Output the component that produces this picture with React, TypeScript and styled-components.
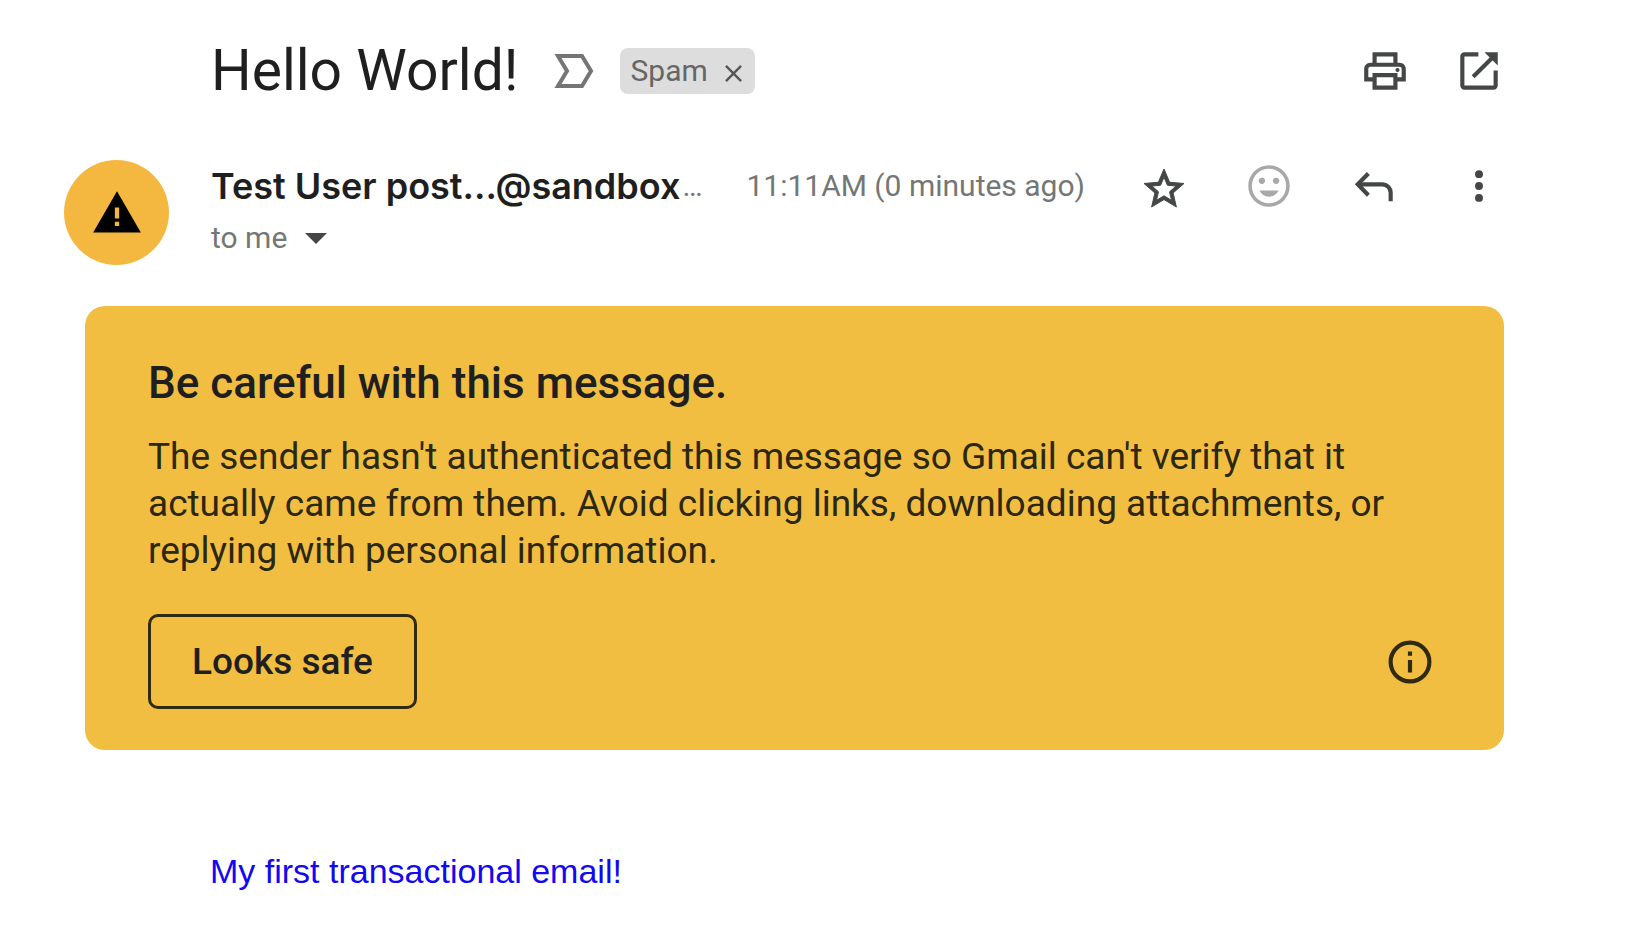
import React from 'react';
import styled, { createGlobalStyle } from 'styled-components';

const GlobalStyle = createGlobalStyle`
  *, *::before, *::after { box-sizing: border-box; }
  body { margin: 0; background: #fff; }
  button { font: inherit; color: inherit; background: none; border: 0; padding: 0; cursor: pointer; }
  h1, h2, p { margin: 0; }
`;

const Message = styled.main`
  padding: 39px 142px 40px 64px;
  font-family: Roboto, "Liberation Sans", sans-serif;
  color: #1f1f1f;
`;

const SubjectBar = styled.header`
  display: flex;
  align-items: center;
  justify-content: space-between;
  min-height: 64px;
  padding-left: 147px;
`;

const SubjectGroup = styled.div`
  display: flex;
  align-items: center;
`;

const Subject = styled.h1`
  font-size: 57px;
  line-height: 64px;
  font-weight: 400;
`;

const ImportantButton = styled.button`
  display: flex;
  margin: 0 26px 0 35px;
  color: #757575;
`;

const Chip = styled.span`
  display: flex;
  align-items: center;
  gap: 17px;
  height: 46px;
  padding: 0 13px 0 11px;
  border-radius: 8px;
  background: #ddd;
  color: #666;
  font-size: 30px;
  line-height: 46px;
`;

const ChipClose = styled.button`
  display: flex;
  padding-top: 4px;
  color: #555;
`;

const Actions = styled.div<{ $gap: number }>`
  display: flex;
  align-items: center;
  flex: none;
  gap: ${(p) => p.$gap}px;
`;

const IconButton = styled.button<{ $tone?: string }>`
  display: flex;
  flex: none;
  width: 50px;
  height: 50px;
  color: ${(p) => p.$tone ?? '#444746'};

  svg { width: 100%; height: 100%; }
`;

const SenderBar = styled.section`
  display: flex;
  align-items: flex-start;
  gap: 42px;
  margin-top: 57px;
`;

const Avatar = styled.div`
  display: grid;
  place-items: center;
  flex: none;
  width: 105px;
  height: 105px;
  border-radius: 50%;
  background: #f4b740;
  color: #000;
`;

const SenderDetails = styled.div`
  flex: 1;
  min-width: 0;
`;

const SenderLine = styled.div`
  display: flex;
  align-items: center;
  height: 52px;
`;

const SenderName = styled.span`
  margin-right: 2px;
  font-family: Inter, Roboto, sans-serif;
  font-size: 36px;
  line-height: 52px;
  font-weight: 600;
  white-space: nowrap;
`;

const Meta = styled.span`
  color: #747775;
  font-size: 30px;
  line-height: 52px;
  white-space: nowrap;
`;

const SentTime = styled.time`
  margin: 0 54px 0 auto;
  color: #747775;
  font-size: 30px;
  line-height: 52px;
  white-space: nowrap;
`;

const RecipientButton = styled.button`
  display: flex;
  align-items: center;
  gap: 18px;
`;

const Warning = styled.section`
  margin: 41px 0 0 21px;
  padding: 51px 69px 41px 63px;
  border-radius: 20px;
  background: #f1be42;
`;

const WarningTitle = styled.h2`
  font-size: 44px;
  line-height: 52px;
  font-weight: 500;
`;

const WarningText = styled.p`
  margin-top: 24px;
  color: #2b2710;
  font-size: 37px;
  line-height: 47px;
`;

const WarningActions = styled.div`
  display: flex;
  align-items: center;
  justify-content: space-between;
  margin-top: 40px;
`;

const SafeButton = styled.button`
  height: 95px;
  padding: 0 41px;
  border: 3px solid #2f2a10;
  border-radius: 10px;
  font-size: 37px;
  font-weight: 500;
`;

const Body = styled.p`
  margin: 101px 0 0 146px;
  color: #1408f0;
  font-family: "Liberation Sans", sans-serif;
  font-size: 34px;
  line-height: 40px;
`;

const ImportantIcon = () => (
  <svg width="40" height="34" viewBox="0 0 40 34" fill="none" stroke="currentColor" strokeWidth="4" aria-hidden="true">
    <path d="M4 2H28L37 17 28 32H4L13 17Z" />
  </svg>
);

const CloseIcon = () => (
  <svg width="17" height="17" viewBox="0 0 18 18" stroke="currentColor" strokeWidth="2.5" aria-hidden="true">
    <path d="M1 1L17 17M17 1L1 17" />
  </svg>
);

const PrintIcon = () => (
  <svg viewBox="0 0 24 24" fill="currentColor" aria-hidden="true">
    <path d="M19 8h-1V3H6v5H5c-1.66 0-3 1.34-3 3v6h4v4h12v-4h4v-6c0-1.66-1.34-3-3-3zM8 5h8v3H8V5zm8 14H8v-4h8v4zm2-4v-2H6v2H4v-4c0-.55.45-1 1-1h14c.55 0 1 .45 1 1v4h-2z" />
    <circle cx="18" cy="11.5" r="1" />
  </svg>
);

const OpenIcon = () => (
  <svg viewBox="0 0 24 24" fill="none" stroke="currentColor" strokeWidth="2" aria-hidden="true">
    <path d="M11.7 4H5a1 1 0 0 0-1 1v14a1 1 0 0 0 1 1h14a1 1 0 0 0 1-1v-7.300" />
    <path d="M9.200 14.800L19 5" />
    <path d="M14.600 3H21v6.400L14.600 3Z" fill="currentColor" stroke="none" />
  </svg>
);

const WarningIcon = () => (
  <svg width="52" height="52" viewBox="0 0 24 24" fill="currentColor" aria-hidden="true">
    <path d="M1 21h22L12 2 1 21zm12-3h-2v-2h2v2zm0-3.500h-2v-5h2v5z" />
  </svg>
);

const StarIcon = () => (
  <svg viewBox="-0.5 -2 25 25" fill="currentColor" stroke="currentColor" strokeWidth="0.5" aria-hidden="true">
    <path d="M22 9.240l-7.190-.62L12 2 9.190 8.630 2 9.240l5.460 4.730L5.820 21 12 17.270 18.180 21l-1.630-7.030L22 9.240zM12 15.400l-3.760 2.270 1-4.280-3.320-2.880 4.380-.38L12 6.100l1.710 4.040 4.380.38-3.320 2.880 1 4.280L12 15.400z" />
  </svg>
);

const SmileIcon = () => (
  <svg viewBox="0 0 24 24" fill="currentColor" aria-hidden="true">
    <circle cx="12" cy="12" r="9.100" fill="none" stroke="currentColor" strokeWidth="1.700" />
    <circle cx="8.600" cy="9.500" r="1.500" />
    <circle cx="15.400" cy="9.500" r="1.500" />
    <path d="M7.400 14.200h9.200c-.9 1.900-2.500 2.900-4.600 2.900s-3.700-1-4.600-2.900z" />
  </svg>
);

const ReplyIcon = () => (
  <svg viewBox="0 0 24 24" fill="none" stroke="currentColor" strokeWidth="2" aria-hidden="true">
    <path d="M9.300 6L4.200 11.200 9.300 16.400" />
    <path d="M4.200 11.200H16a4 4 0 0 1 4 4V19.300" />
  </svg>
);

const MoreIcon = () => (
  <svg viewBox="0 0 24 24" fill="currentColor" aria-hidden="true">
    <circle cx="12" cy="6.300" r="1.900" />
    <circle cx="12" cy="12" r="1.900" />
    <circle cx="12" cy="17.700" r="1.900" />
  </svg>
);

const CaretIcon = () => (
  <svg width="22" height="11" viewBox="0 0 22 11" fill="#444746" aria-hidden="true">
    <path d="M0 0H22L11 11Z" />
  </svg>
);

const InfoIcon = () => (
  <svg viewBox="0 0 24 24" fill="currentColor" aria-hidden="true">
    <circle cx="12" cy="12" r="9.300" fill="none" stroke="currentColor" strokeWidth="2" />
    <path d="M11 7h2v2h-2zM11 11h2v6h-2z" />
  </svg>
);

export default function App() {
  return (
    <>
      <GlobalStyle />
      <Message>
        <SubjectBar>
          <SubjectGroup>
            <Subject>Hello World!</Subject>
            <ImportantButton aria-label="Mark as important"><ImportantIcon /></ImportantButton>
            <Chip>
              Spam
              <ChipClose aria-label="Remove label Spam"><CloseIcon /></ChipClose>
            </Chip>
          </SubjectGroup>
          <Actions $gap={44}>
            <IconButton aria-label="Print"><PrintIcon /></IconButton>
            <IconButton aria-label="Open in new window"><OpenIcon /></IconButton>
          </Actions>
        </SubjectBar>

        <SenderBar>
          <Avatar><WarningIcon /></Avatar>
          <SenderDetails>
            <SenderLine>
              <SenderName>Test User post...@sandbox</SenderName>
              <Meta>…</Meta>
              <SentTime>11:11AM (0 minutes ago)</SentTime>
              <Actions $gap={55}>
                <IconButton aria-label="Star"><StarIcon /></IconButton>
                <IconButton aria-label="Add reaction" $tone="#a8a8a8"><SmileIcon /></IconButton>
                <IconButton aria-label="Reply"><ReplyIcon /></IconButton>
                <IconButton aria-label="More options"><MoreIcon /></IconButton>
              </Actions>
            </SenderLine>
            <RecipientButton aria-label="Show details">
              <Meta>to me</Meta>
              <CaretIcon />
            </RecipientButton>
          </SenderDetails>
        </SenderBar>

        <Warning>
          <WarningTitle>Be careful with this message.</WarningTitle>
          <WarningText>
            The sender hasn't authenticated this message so Gmail can't verify that it actually came
            from them. Avoid clicking links, downloading attachments, or replying with personal
            information.
          </WarningText>
          <WarningActions>
            <SafeButton>Looks safe</SafeButton>
            <IconButton aria-label="More information" $tone="#2f2a10"><InfoIcon /></IconButton>
          </WarningActions>
        </Warning>

        <Body>My first transactional email!</Body>
      </Message>
    </>
  );
}
